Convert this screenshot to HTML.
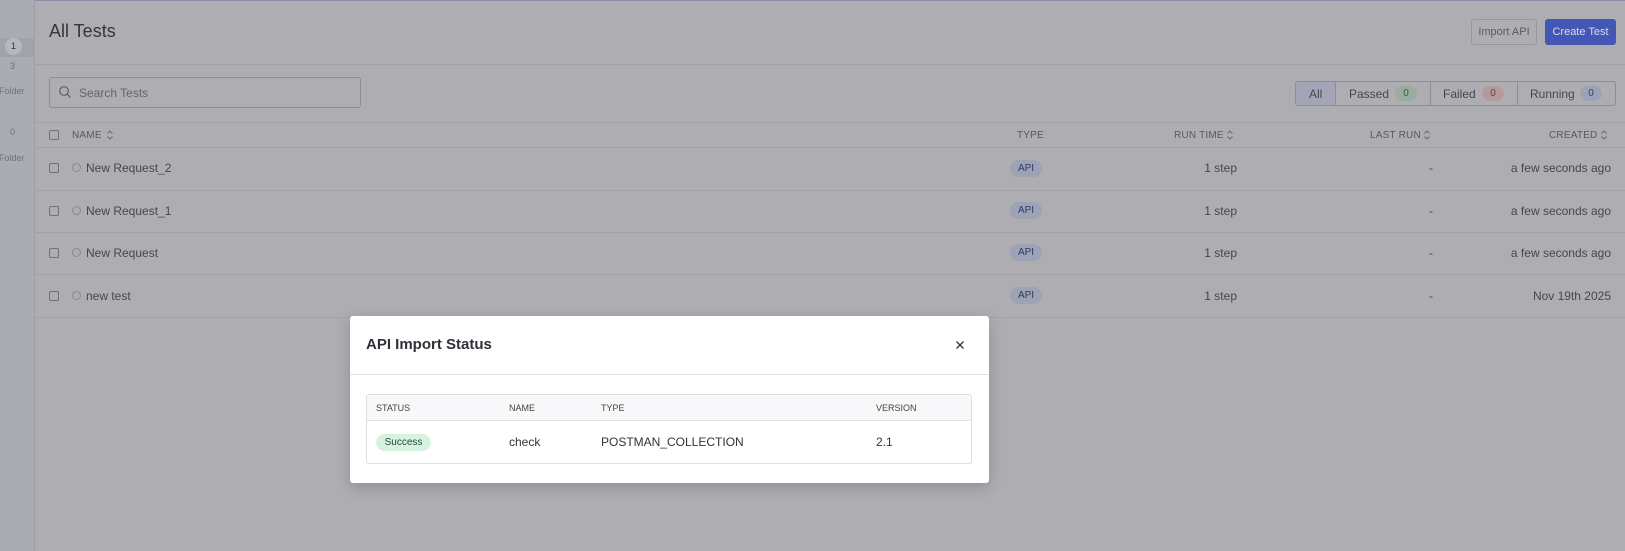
<!DOCTYPE html>
<html><head><meta charset="utf-8"><style>
*{box-sizing:border-box;margin:0;padding:0}
body{width:1625px;height:551px;overflow:hidden;background:#aeadb2;font-family:"Liberation Sans",sans-serif;position:relative;color:#3d3d44}
.a{position:absolute}
.side{left:0;top:0;width:35px;height:551px;background:#a9acb3;border-right:1px solid #9c9ea5}
.top{left:0;top:0;width:1625px;height:1px;background:#8d8fa6}
.hl{height:1px;background:#a2a1a7;left:35px;width:1590px}
.t12{font-size:12px;color:#46464e}
.hdr{font-size:10px;color:#58585f;letter-spacing:.2px}
.cb{width:10px;height:10px;border:1px solid #707078;border-radius:2px}
.circ{width:9px;height:9px;border:1px solid #8a8a92;border-radius:50%}
.api{width:32px;height:17px;border-radius:9px;background:#9da3b5;color:#2e3a60;font-size:10px;text-align:center;line-height:17px}
.pill{height:15px;border-radius:8px;font-size:10px;text-align:center;line-height:15px;width:22px}
.srt{position:absolute;width:8px;height:12px}
.r{text-align:right;width:200px}
</style></head><body>
<div class="a top"></div>
<div class="a side"></div>
<div class="a" style="left:0;top:38px;width:35px;height:19px;background:#a0a3aa"></div>
<div class="a" style="left:5px;top:38px;width:17px;height:17px;border-radius:50%;background:#b7b8bd;font-size:9px;text-align:center;line-height:17px;color:#333">1</div>
<div class="a" style="left:10px;top:61px;font-size:9px;color:#707078">3</div>
<div class="a" style="left:-1px;top:86px;font-size:9px;color:#707078">Folder</div>
<div class="a" style="left:10px;top:127px;font-size:9px;color:#707078">0</div>
<div class="a" style="left:-1px;top:153px;font-size:9px;color:#707078">Folder</div>

<div class="a" style="left:49px;top:21px;font-size:18px;color:#333640">All Tests</div>
<div class="a" style="left:1471px;top:19px;width:66px;height:26px;border:1px solid #96959c;border-radius:3px;font-size:11px;color:#5a5a62;text-align:center;line-height:24px">Import API</div>
<div class="a" style="left:1545px;top:19px;width:71px;height:26px;background:#4357b4;border-radius:3px;font-size:11px;color:#d8dcef;text-align:center;line-height:26px">Create Test</div>
<div class="a hl" style="top:64px"></div>

<div class="a" style="left:49px;top:77px;width:312px;height:31px;border:1px solid #8e8d94;border-radius:3px"></div>
<svg class="a" style="left:58px;top:85px" width="14" height="14" viewBox="0 0 14 14"><circle cx="6" cy="6" r="4.3" fill="none" stroke="#5e5e66" stroke-width="1.2"/><path d="M9.2 9.2L12.5 12.5" stroke="#5e5e66" stroke-width="1.2"/></svg>
<div class="a t12" style="left:79px;top:86px;color:#63636b">Search Tests</div>

<div class="a" style="left:1295px;top:81px;width:321px;height:25px;border:1px solid #8e8d94;border-radius:3px;background:#aeadb2"></div>
<div class="a" style="left:1296px;top:82px;width:40px;height:23px;background:#a3a5b6;border-right:1px solid #8e8d94"></div>
<div class="a t12" style="left:1309px;top:87px">All</div>
<div class="a" style="left:1430px;top:82px;width:1px;height:23px;background:#8e8d94"></div>
<div class="a" style="left:1517px;top:82px;width:1px;height:23px;background:#8e8d94"></div>
<div class="a t12" style="left:1349px;top:87px">Passed</div>
<div class="a pill" style="left:1395px;top:86px;background:#98ac9f;color:#3c5a45">0</div>
<div class="a t12" style="left:1443px;top:87px">Failed</div>
<div class="a pill" style="left:1482px;top:86px;background:#b59a9c;color:#6a3e40">0</div>
<div class="a t12" style="left:1530px;top:87px">Running</div>
<div class="a pill" style="left:1580px;top:86px;background:#9ba4b6;color:#34406a">0</div>

<div class="a hl" style="top:122px"></div>
<div class="a cb" style="left:49px;top:130px"></div>
<div class="a hdr" style="left:72px;top:130px">NAME</div>
<div class="a hdr" style="left:1017px;top:130px">TYPE</div>
<div class="a hdr" style="left:1174px;top:130px">RUN TIME</div>
<div class="a hdr" style="left:1370px;top:130px">LAST RUN</div>
<div class="a hdr" style="left:1549px;top:130px">CREATED</div>
<svg class="srt" style="left:106px;top:129px" viewBox="0 0 8 12"><path d="M1.5 4.5L4 2L6.5 4.5M1.5 7.5L4 10L6.5 7.5" fill="none" stroke="#6a6a72" stroke-width="1"/></svg>
<svg class="srt" style="left:1226px;top:129px" viewBox="0 0 8 12"><path d="M1.5 4.5L4 2L6.5 4.5M1.5 7.5L4 10L6.5 7.5" fill="none" stroke="#6a6a72" stroke-width="1"/></svg>
<svg class="srt" style="left:1423px;top:129px" viewBox="0 0 8 12"><path d="M1.5 4.5L4 2L6.5 4.5M1.5 7.5L4 10L6.5 7.5" fill="none" stroke="#6a6a72" stroke-width="1"/></svg>
<svg class="srt" style="left:1600px;top:129px" viewBox="0 0 8 12"><path d="M1.5 4.5L4 2L6.5 4.5M1.5 7.5L4 10L6.5 7.5" fill="none" stroke="#6a6a72" stroke-width="1"/></svg>
<div class="a hl" style="top:147px"></div>

<div class="a cb" style="left:49px;top:163px"></div><div class="a circ" style="left:72px;top:163px"></div>
<div class="a t12" style="left:86px;top:161px">New Request_2</div>
<div class="a api" style="left:1010px;top:160px">API</div>
<div class="a t12 r" style="left:1037px;top:161px">1 step</div>
<div class="a t12" style="left:1429px;top:161px">-</div>
<div class="a t12 r" style="left:1411px;top:161px">a few seconds ago</div>
<div class="a hl" style="top:190px"></div>

<div class="a cb" style="left:49px;top:206px"></div><div class="a circ" style="left:72px;top:206px"></div>
<div class="a t12" style="left:86px;top:204px">New Request_1</div>
<div class="a api" style="left:1010px;top:202px">API</div>
<div class="a t12 r" style="left:1037px;top:204px">1 step</div>
<div class="a t12" style="left:1429px;top:204px">-</div>
<div class="a t12 r" style="left:1411px;top:204px">a few seconds ago</div>
<div class="a hl" style="top:232px"></div>

<div class="a cb" style="left:49px;top:248px"></div><div class="a circ" style="left:72px;top:248px"></div>
<div class="a t12" style="left:86px;top:246px">New Request</div>
<div class="a api" style="left:1010px;top:244px">API</div>
<div class="a t12 r" style="left:1037px;top:246px">1 step</div>
<div class="a t12" style="left:1429px;top:246px">-</div>
<div class="a t12 r" style="left:1411px;top:246px">a few seconds ago</div>
<div class="a hl" style="top:274px"></div>

<div class="a cb" style="left:49px;top:291px"></div><div class="a circ" style="left:72px;top:291px"></div>
<div class="a t12" style="left:86px;top:289px">new test</div>
<div class="a api" style="left:1010px;top:287px">API</div>
<div class="a t12 r" style="left:1037px;top:289px">1 step</div>
<div class="a t12" style="left:1429px;top:289px">-</div>
<div class="a t12 r" style="left:1411px;top:289px">Nov 19th 2025</div>
<div class="a hl" style="top:317px"></div>

<div class="a" style="left:350px;top:316px;width:639px;height:167px;background:#fff;border-radius:3px;box-shadow:0 4px 14px rgba(0,0,0,.18)">
 <div class="a" style="left:16px;top:20px;font-size:15px;font-weight:bold;color:#2f3138">API Import Status</div>
 <svg class="a" style="left:605px;top:24px" width="10" height="10" viewBox="0 0 10 10"><path d="M1.5 1.5L8.5 8.5M8.5 1.5L1.5 8.5" stroke="#333" stroke-width="1.3"/></svg>
 <div class="a" style="left:0;top:58px;width:639px;height:1px;background:#e3e3e6"></div>
 <div class="a" style="left:16px;top:78px;width:606px;height:70px;border:1px solid #dedee2;border-radius:3px;overflow:hidden">
  <div class="a" style="left:0;top:0;width:606px;height:26px;background:#f8f8fa;border-bottom:1px solid #e3e3e6"></div>
  <div class="a" style="left:9px;top:8px;font-size:9px;color:#444">STATUS</div>
  <div class="a" style="left:142px;top:8px;font-size:9px;color:#444">NAME</div>
  <div class="a" style="left:234px;top:8px;font-size:9px;color:#444">TYPE</div>
  <div class="a" style="left:509px;top:8px;font-size:9px;color:#444">VERSION</div>
  <div class="a" style="left:9px;top:39px;width:55px;height:17px;border-radius:9px;background:#d6f3e2;color:#1e4a30;font-size:10px;text-align:center;line-height:17px">Success</div>
  <div class="a" style="left:142px;top:40px;font-size:12px;color:#333">check</div>
  <div class="a" style="left:234px;top:40px;font-size:12px;color:#333">POSTMAN_COLLECTION</div>
  <div class="a" style="left:509px;top:40px;font-size:12px;color:#333">2.1</div>
 </div>
</div>
</body></html>
